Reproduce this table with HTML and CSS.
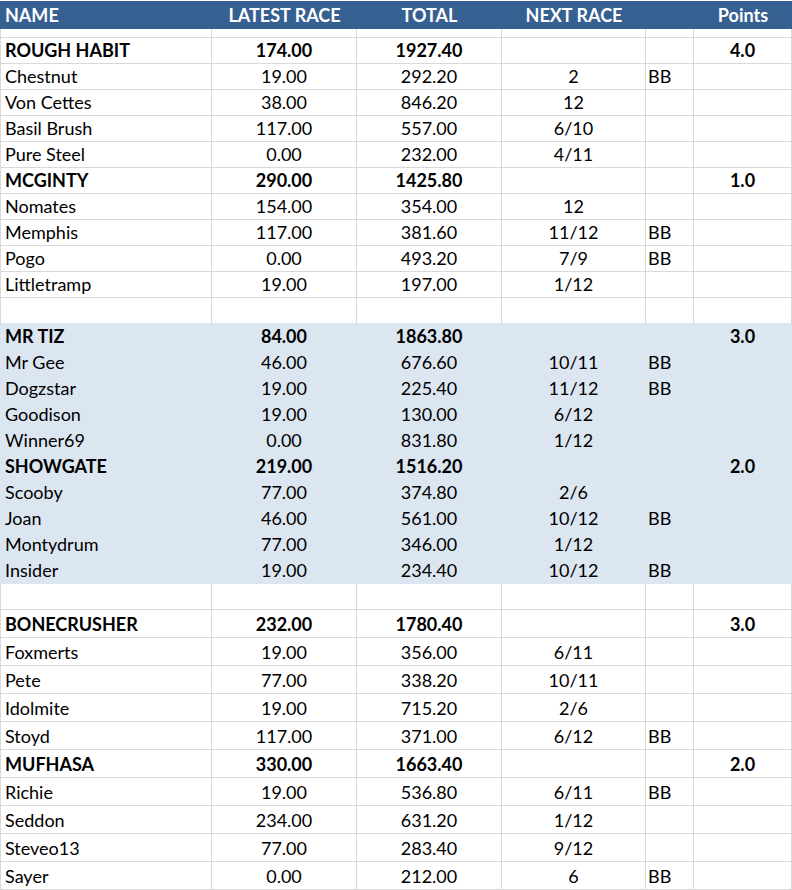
FILE: index.html
```html
<!DOCTYPE html>
<html>
<head>
<meta charset="utf-8">
<link rel="stylesheet" href="styles.css">
</head>
<body>
<div class="sheet">
  <div class="row head">
    <div class="cell name">NAME</div>
    <div class="cell">LATEST RACE</div>
    <div class="cell">TOTAL</div>
    <div class="cell">NEXT RACE</div>
    <div class="cell"></div>
    <div class="cell">Points</div>
  </div>
  <div class="row spacer"><div class="cell"></div><div class="cell"></div><div class="cell"></div><div class="cell"></div><div class="cell"></div><div class="cell"></div></div>

  <div class="row team"><div class="cell name">ROUGH HABIT</div><div class="cell">174.00</div><div class="cell">1927.40</div><div class="cell"></div><div class="cell bb"></div><div class="cell">4.0</div></div>
  <div class="row"><div class="cell name">Chestnut</div><div class="cell">19.00</div><div class="cell">292.20</div><div class="cell">2</div><div class="cell bb">BB</div><div class="cell"></div></div>
  <div class="row"><div class="cell name">Von Cettes</div><div class="cell">38.00</div><div class="cell">846.20</div><div class="cell">12</div><div class="cell bb"></div><div class="cell"></div></div>
  <div class="row"><div class="cell name">Basil Brush</div><div class="cell">117.00</div><div class="cell">557.00</div><div class="cell">6/10</div><div class="cell bb"></div><div class="cell"></div></div>
  <div class="row"><div class="cell name">Pure Steel</div><div class="cell">0.00</div><div class="cell">232.00</div><div class="cell">4/11</div><div class="cell bb"></div><div class="cell"></div></div>
  <div class="row team"><div class="cell name">MCGINTY</div><div class="cell">290.00</div><div class="cell">1425.80</div><div class="cell"></div><div class="cell bb"></div><div class="cell">1.0</div></div>
  <div class="row"><div class="cell name">Nomates</div><div class="cell">154.00</div><div class="cell">354.00</div><div class="cell">12</div><div class="cell bb"></div><div class="cell"></div></div>
  <div class="row"><div class="cell name">Memphis</div><div class="cell">117.00</div><div class="cell">381.60</div><div class="cell">11/12</div><div class="cell bb">BB</div><div class="cell"></div></div>
  <div class="row"><div class="cell name">Pogo</div><div class="cell">0.00</div><div class="cell">493.20</div><div class="cell">7/9</div><div class="cell bb">BB</div><div class="cell"></div></div>
  <div class="row"><div class="cell name">Littletramp</div><div class="cell">19.00</div><div class="cell">197.00</div><div class="cell">1/12</div><div class="cell bb"></div><div class="cell"></div></div>
  <div class="row pre-band"><div class="cell"></div><div class="cell"></div><div class="cell"></div><div class="cell"></div><div class="cell"></div><div class="cell"></div></div>

  <div class="row team band"><div class="cell name">MR TIZ</div><div class="cell">84.00</div><div class="cell">1863.80</div><div class="cell"></div><div class="cell bb"></div><div class="cell">3.0</div></div>
  <div class="row band"><div class="cell name">Mr Gee</div><div class="cell">46.00</div><div class="cell">676.60</div><div class="cell">10/11</div><div class="cell bb">BB</div><div class="cell"></div></div>
  <div class="row band"><div class="cell name">Dogzstar</div><div class="cell">19.00</div><div class="cell">225.40</div><div class="cell">11/12</div><div class="cell bb">BB</div><div class="cell"></div></div>
  <div class="row band"><div class="cell name">Goodison</div><div class="cell">19.00</div><div class="cell">130.00</div><div class="cell">6/12</div><div class="cell bb"></div><div class="cell"></div></div>
  <div class="row band"><div class="cell name">Winner69</div><div class="cell">0.00</div><div class="cell">831.80</div><div class="cell">1/12</div><div class="cell bb"></div><div class="cell"></div></div>
  <div class="row team band"><div class="cell name">SHOWGATE</div><div class="cell">219.00</div><div class="cell">1516.20</div><div class="cell"></div><div class="cell bb"></div><div class="cell">2.0</div></div>
  <div class="row band"><div class="cell name">Scooby</div><div class="cell">77.00</div><div class="cell">374.80</div><div class="cell">2/6</div><div class="cell bb"></div><div class="cell"></div></div>
  <div class="row band"><div class="cell name">Joan</div><div class="cell">46.00</div><div class="cell">561.00</div><div class="cell">10/12</div><div class="cell bb">BB</div><div class="cell"></div></div>
  <div class="row band"><div class="cell name">Montydrum</div><div class="cell">77.00</div><div class="cell">346.00</div><div class="cell">1/12</div><div class="cell bb"></div><div class="cell"></div></div>
  <div class="row band"><div class="cell name">Insider</div><div class="cell">19.00</div><div class="cell">234.40</div><div class="cell">10/12</div><div class="cell bb">BB</div><div class="cell"></div></div>
  <div class="row"><div class="cell"></div><div class="cell"></div><div class="cell"></div><div class="cell"></div><div class="cell"></div><div class="cell"></div></div>

  <div class="row team tall"><div class="cell name">BONECRUSHER</div><div class="cell">232.00</div><div class="cell">1780.40</div><div class="cell"></div><div class="cell bb"></div><div class="cell">3.0</div></div>
  <div class="row tall"><div class="cell name">Foxmerts</div><div class="cell">19.00</div><div class="cell">356.00</div><div class="cell">6/11</div><div class="cell bb"></div><div class="cell"></div></div>
  <div class="row tall"><div class="cell name">Pete</div><div class="cell">77.00</div><div class="cell">338.20</div><div class="cell">10/11</div><div class="cell bb"></div><div class="cell"></div></div>
  <div class="row tall"><div class="cell name">Idolmite</div><div class="cell">19.00</div><div class="cell">715.20</div><div class="cell">2/6</div><div class="cell bb"></div><div class="cell"></div></div>
  <div class="row tall"><div class="cell name">Stoyd</div><div class="cell">117.00</div><div class="cell">371.00</div><div class="cell">6/12</div><div class="cell bb">BB</div><div class="cell"></div></div>
  <div class="row team tall"><div class="cell name">MUFHASA</div><div class="cell">330.00</div><div class="cell">1663.40</div><div class="cell"></div><div class="cell bb"></div><div class="cell">2.0</div></div>
  <div class="row tall"><div class="cell name">Richie</div><div class="cell">19.00</div><div class="cell">536.80</div><div class="cell">6/11</div><div class="cell bb">BB</div><div class="cell"></div></div>
  <div class="row tall"><div class="cell name">Seddon</div><div class="cell">234.00</div><div class="cell">631.20</div><div class="cell">1/12</div><div class="cell bb"></div><div class="cell"></div></div>
  <div class="row tall"><div class="cell name">Steveo13</div><div class="cell">77.00</div><div class="cell">283.40</div><div class="cell">9/12</div><div class="cell bb"></div><div class="cell"></div></div>
  <div class="row tall"><div class="cell name">Sayer</div><div class="cell">0.00</div><div class="cell">212.00</div><div class="cell">6</div><div class="cell bb">BB</div><div class="cell"></div></div>
</div>
</body>
</html>
```

FILE: styles.css
```css
html, body {
  margin: 0;
  padding: 0;
  background: #ffffff;
}

body {
  font-family: Lato, "Open Sans", sans-serif;
  font-size: 18px;
  color: #000000;
  width: 792px;
  height: 890px;
  overflow: hidden;
}

.sheet {
  display: flex;
  flex-direction: column;
}

.row {
  display: grid;
  grid-template-columns: 211px 145px 145px 144px 48px 98px;
  height: 26px;
  border-left: 1px solid #d9d9d9;
}

.cell {
  box-sizing: border-box;
  border-right: 1px solid #d9d9d9;
  border-bottom: 1px solid #d9d9d9;
  display: flex;
  align-items: center;
  justify-content: center;
  white-space: nowrap;
  line-height: 1;
  padding-bottom: 2px;
}

.cell.name {
  justify-content: flex-start;
  padding-left: 4px;
}

.cell.bb {
  justify-content: flex-start;
  padding-left: 2px;
}

.head {
  margin-top: 1px;
  height: 28px;
  background: #366092;
  color: #ffffff;
  font-weight: bold;
  border-left-color: #366092;
}

.head .cell {
  border: none;
  padding-bottom: 1px;
}

.spacer {
  height: 9px;
}

.team {
  font-weight: bold;
}

.pre-band .cell {
  border-bottom-color: #dce6f1;
}

.band {
  background: #dce6f1;
  border-left-color: #dce6f1;
}

.band .cell {
  border-color: #dce6f1;
}

.tall {
  height: 28px;
}

.tall .cell {
  padding-bottom: 0;
}
```
